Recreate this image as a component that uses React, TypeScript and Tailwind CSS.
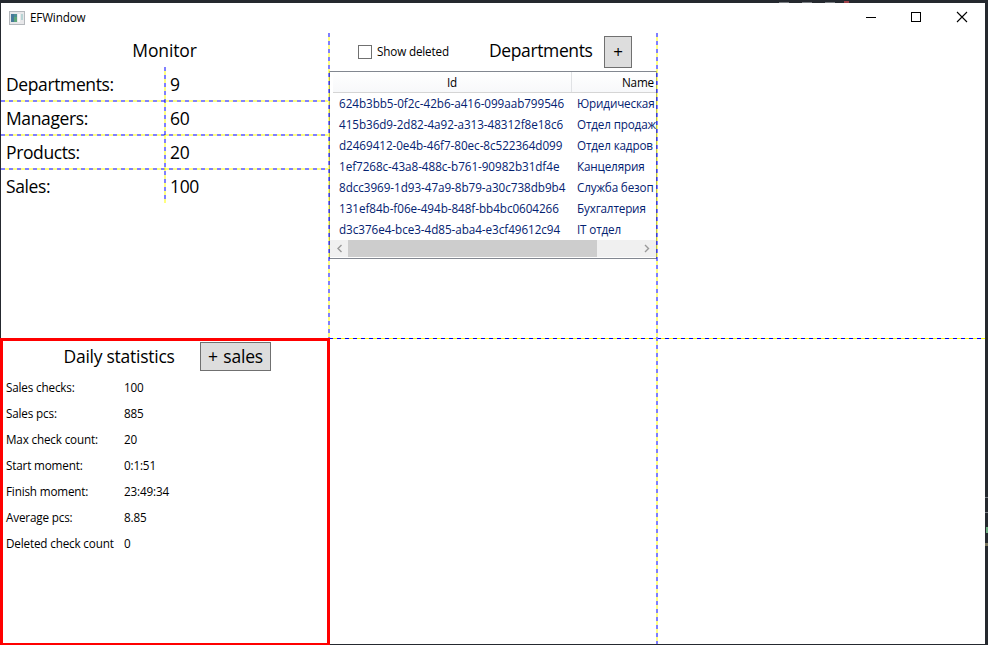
import type { ReactNode } from "react";

const departments: [string, string][] = [
  ["624b3bb5-0f2c-42b6-a416-099aab799546", "Юридическая"],
  ["415b36d9-2d82-4a92-a313-48312f8e18c6", "Отдел продаж"],
  ["d2469412-0e4b-46f7-80ec-8c522364d099", "Отдел кадров"],
  ["1ef7268c-43a8-488c-b761-90982b31df4e", "Канцелярия"],
  ["8dcc3969-1d93-47a9-8b79-a30c738db9b4", "Служба безоп"],
  ["131ef84b-f06e-494b-848f-bb4bc0604266", "Бухгалтерия"],
  ["d3c376e4-bce3-4d85-aba4-e3cf49612c94", "IT отдел"],
];

const monitor: [string, string][] = [
  ["Departments:", "9"],
  ["Managers:", "60"],
  ["Products:", "20"],
  ["Sales:", "100"],
];

const stats: [string, string][] = [
  ["Sales checks:", "100"],
  ["Sales pcs:", "885"],
  ["Max check count:", "20"],
  ["Start moment:", "0:1:51"],
  ["Finish moment:", "23:49:34"],
  ["Average pcs:", "8.85"],
  ["Deleted check count", "0"],
];

const vDash =
  "w-[2px] shrink-0 bg-[repeating-linear-gradient(180deg,#0000ff80_0px,#0000ff80_4px,#ffff0080_4px,#ffff0080_8px)]";
const hDash =
  "h-[2px] shrink-0 bg-[repeating-linear-gradient(90deg,#0000ff80_0px,#0000ff80_4px,#ffff0080_4px,#ffff0080_8px)]";
const thinDash =
  "h-px shrink-0 bg-[repeating-linear-gradient(90deg,#0000ff_0px,#0000ff_3px,#ffff00_3px,#ffff00_7px,#0000ff_7px,#0000ff_8px)]";

const large = "text-[17.5px] tracking-[-0.38px]";
const small = "text-[11.7px] tracking-[-0.16px]";

function TitleBar() {
  return (
    <header className="flex h-[30px] shrink-0 items-center bg-white pl-2">
      <svg width="16" height="14" viewBox="0 0 16 14" className="shrink-0">
        <rect x="0.5" y="0.5" width="15" height="13" fill="#e8e8ea" stroke="#b4b8bc" />
        <rect x="2" y="3" width="6" height="8" fill="#4d8f93" />
        <rect x="2" y="3" width="3" height="8" fill="#467a9a" />
        <rect x="5" y="6" width="3" height="5" fill="#5da579" />
        <rect x="9" y="3" width="2" height="8" fill="#fafafa" />
        <rect x="12" y="3" width="2" height="6" fill="#b7d4d4" />
      </svg>
      <span className={`ml-[5px] grow ${small}`}>EFWindow</span>
      <svg width="120" height="30" viewBox="0 0 120 30" className="shrink-0" shapeRendering="crispEdges">
        <rect x="1" y="14" width="10" height="1" />
        <rect x="46.5" y="9.5" width="9" height="9" fill="none" stroke="#000" />
        <path d="M92 9l10 10M102 9l-10 10" stroke="#000" strokeWidth="1.1" shapeRendering="auto" />
      </svg>
    </header>
  );
}

function GrayButton({ className, children }: { className: string; children: ReactNode }) {
  return (
    <button className={`flex shrink-0 items-center justify-center border border-[#707070] bg-[#dddddd] ${className}`}>
      {children}
    </button>
  );
}

function Monitor() {
  return (
    <section className={`flex w-[327px] shrink-0 flex-col ${large}`}>
      <h2 className="flex h-[34px] items-center justify-center pt-px tracking-[-0.15px]">Monitor</h2>
      <div className="grid grid-cols-1 grid-rows-1">
        <div className="col-start-1 row-start-1 flex flex-col">
          {monitor.map(([k, v], i) => (
            <div key={k} className="flex h-[34px] flex-col">
              <div className="flex h-[33px] shrink-0 items-center pt-[2px] pl-[5px]">
                <span className="w-[164px]">{k}</span>
                <span>{v}</span>
              </div>
              {i < 3 && <div className={`-mb-px ${hDash}`} />}
            </div>
          ))}
        </div>
        <div className={`col-start-1 row-start-1 ml-[163px] ${vDash}`} />
      </div>
    </section>
  );
}

function Departments() {
  return (
    <section className="flex w-[326px] shrink-0 flex-col">
      <div className="flex h-[38px] shrink-0 items-center pl-7">
        <span className="size-[14px] shrink-0 border border-[#707070] bg-white" />
        <span className={`ml-[5px] w-[112px] shrink-0 ${small}`}>Show deleted</span>
        <span className={`-mt-[3px] w-[115px] shrink-0 ${large}`}>Departments</span>
        <GrayButton className="h-8 w-7 text-[17px]">
          <span className="-mt-px">+</span>
        </GrayButton>
      </div>
      <div className={`-mx-px flex h-[188px] flex-col border border-[#828790] ${small}`}>
        <div className="ml-[3px] flex h-[21px] shrink-0 overflow-hidden border-b border-[#d5d5d5] bg-linear-to-b from-white to-[#f7f8fa]">
          <div className="flex w-[239px] shrink-0 items-center justify-center border-r border-[#e0e2e5] pt-px">Id</div>
          <div className="flex grow items-center justify-end pt-px pr-[2px]">Name</div>
        </div>
        <div className="flex h-[147px] shrink-0 flex-col text-[#042271]">
          {departments.map(([id, name]) => (
            <div key={id} className="flex h-[21px] shrink-0 items-center pl-[9px]">
              <span className="w-[238px] shrink-0 tracking-[-0.05px] whitespace-nowrap">{id}</span>
              <span className="w-[78px] shrink-0 whitespace-nowrap">{name}</span>
            </div>
          ))}
        </div>
        <div className="flex h-[17px] shrink-0 items-center bg-[#f0f0f0]">
          <svg width="18" height="17" viewBox="0 0 18 17" fill="none" stroke="#999" strokeWidth="1.4">
            <path d="M11.5 5L8 8.5l3.5 3.5" />
          </svg>
          <div className="h-full w-[249px] bg-[#cdcdcd]" />
          <svg width="17" height="17" viewBox="0 0 17 17" fill="none" stroke="#999" strokeWidth="1.4" className="ml-auto">
            <path d="M6 5l3.5 3.5L6 12" />
          </svg>
        </div>
      </div>
    </section>
  );
}

function DailyStatistics() {
  return (
    <section
      className={`flex w-[330px] shrink-0 flex-col border-x-[3px] border-t-[3px] border-b-2 border-[#ff0000] bg-white ${small}`}
    >
      <div className={`flex h-[34px] shrink-0 items-start pl-[60.5px] ${large}`}>
        <h2 className="w-[136.5px] shrink-0 pt-[2px] tracking-[-0.26px]">Daily statistics</h2>
        <GrayButton className="mt-px h-[29px] w-[71px]">
          <span className="-mt-px tracking-[-0.2px]">
            +<span className="ml-px"> sales</span>
          </span>
        </GrayButton>
      </div>
      {stats.map(([k, v]) => (
        <div key={k} className="flex h-[26px] shrink-0 items-center pl-[3px]">
          <span className="w-[118px] whitespace-nowrap">{k}</span>
          <span>{v}</span>
        </div>
      ))}
    </section>
  );
}

export default function App() {
  return (
    <div className="flex h-[645px] w-[988px] flex-col overflow-hidden bg-[#25292f] font-['Open_Sans','Noto_Sans',sans-serif] text-black">
      <div className="flex h-[3px] shrink-0 items-end gap-[13px] pl-[779px]">
        <span className="h-px w-[10px] bg-[#777b80]" />
        <span className="h-px w-[10px] bg-[#777b80]" />
        <span className="h-px w-[10px] bg-[#777b80]" />
        <span className="-ml-1 h-[2px] w-[5px] bg-[#9d4048]" />
      </div>
      <div className="mr-[3px] ml-px flex h-[335px] shrink-0 flex-col bg-white">
        <TitleBar />
        <main className="flex grow">
          <Monitor />
          <div className={`relative z-10 ${vDash}`} />
          <Departments />
          <div className={`relative z-10 ${vDash}`} />
        </main>
      </div>
      <div className="flex h-[307px] shrink-0">
        <DailyStatistics />
        <div className="mb-px flex w-[655px] bg-white">
          <div className="w-[326px]">
            <div className={thinDash} />
          </div>
          <div className={`bg-size-[2px_8px] bg-position-[0_-1px] ${vDash}`} />
          <div className="w-[327px]">
            <div className={thinDash} />
          </div>
        </div>
        <div className="flex w-[3px] flex-col pt-[159px]">
          <span className="h-px bg-[#777b80]" />
          <span className="mt-[14px] h-px bg-[#777b80]" />
          <span className="mt-[14px] ml-px h-[6px] bg-[#6dab80]" />
          <span className="mt-[10px] h-[3px] bg-[#77735a]" />
        </div>
      </div>
    </div>
  );
}
